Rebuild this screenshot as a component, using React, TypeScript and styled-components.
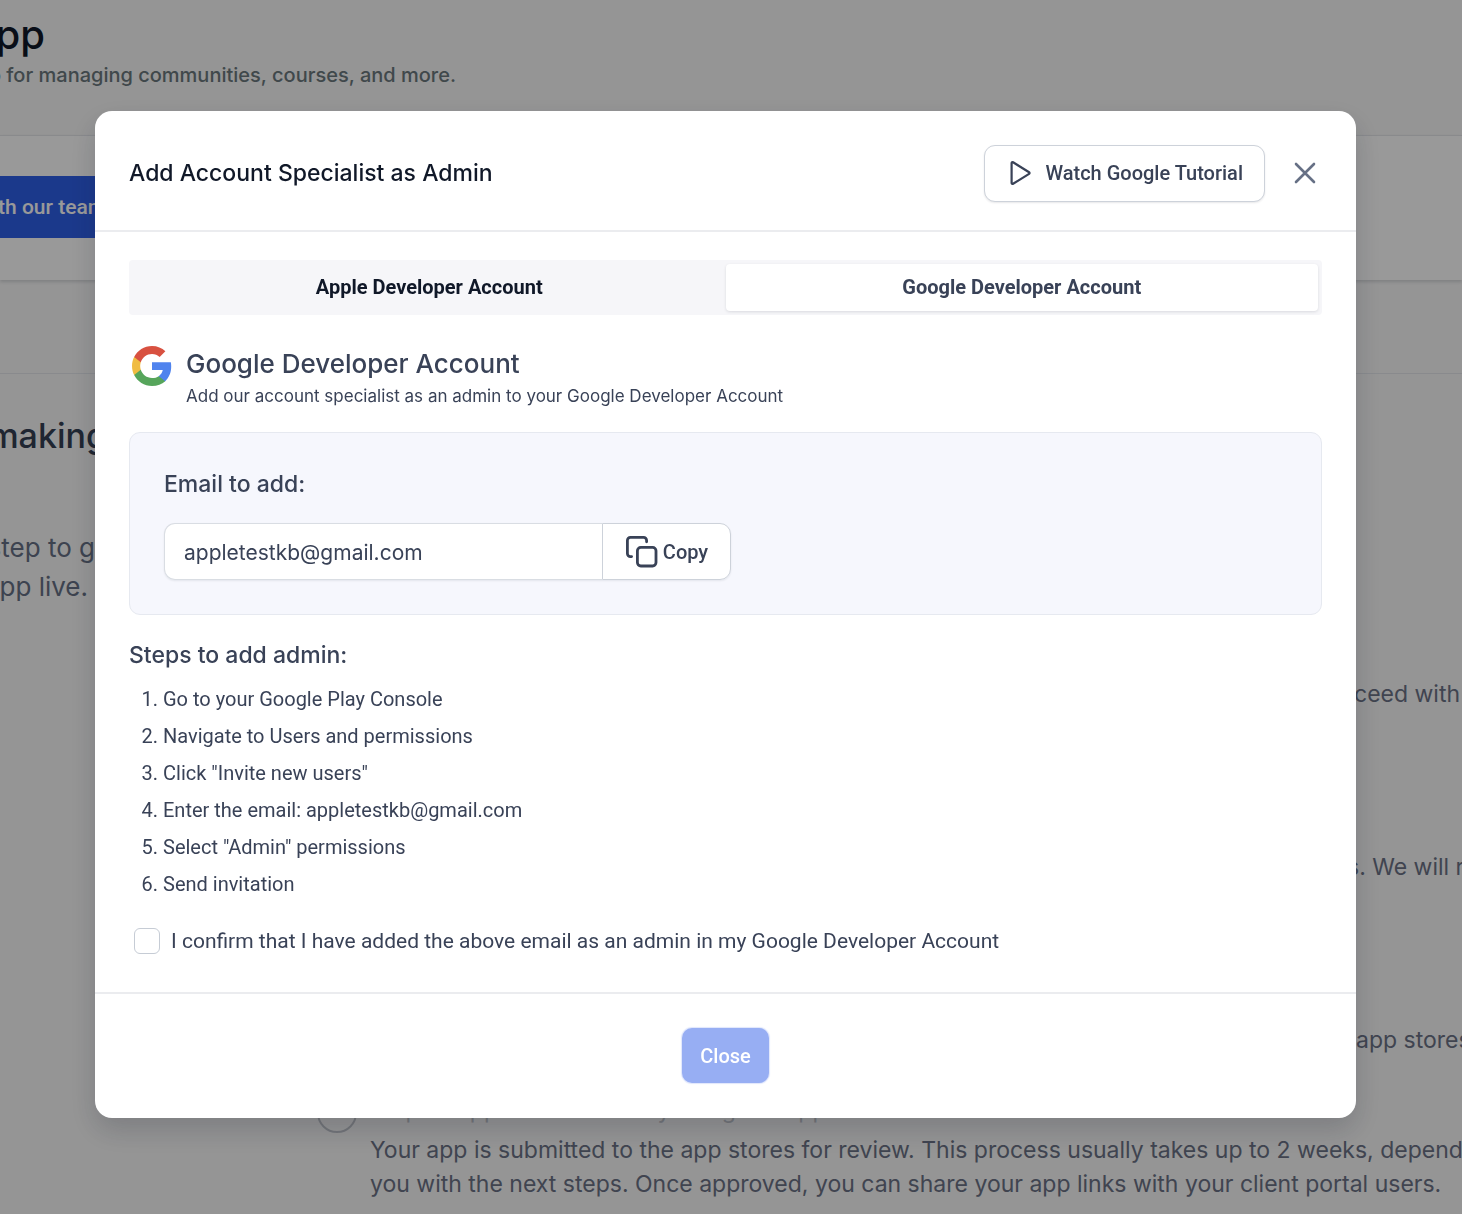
import React, { useState } from "react";
import styled, { createGlobalStyle } from "styled-components";

const inter = `Inter, "Liberation Sans", sans-serif`;
const roboto = `Roboto, "Liberation Sans", sans-serif`;

const GlobalStyle = createGlobalStyle`
  * { box-sizing: border-box; }
  html, body { margin: 0; height: 100%; overflow: hidden; background: #f8f8f8; }
  h1, h2, h3, h4, p, ol { margin: 0; padding: 0; font-weight: inherit; }
  button, input { font: inherit; }
`;

const Page = styled.div`
  font-family: ${inter};
  overflow: hidden;
  height: 100vh;
`;

const PageHeader = styled.header`
  height: 135px;
  padding-top: 8px;
  overflow: hidden;
`;

const Clipped = styled.div<{ $width: number }>`
  display: flex;
  justify-content: flex-end;
  width: ${(p) => p.$width}px;
  overflow: hidden;
  white-space: nowrap;
`;

const PageTitle = styled.h1`
  font-size: 40px;
  line-height: 54px;
  font-weight: 500;
  color: #101828;
`;

const PageSubtitle = styled.p`
  font-size: 20px;
  line-height: 26px;
  font-weight: 500;
  color: #6c787e;
`;

const CallCard = styled.section`
  height: 145px;
  padding-top: 40px;
  background: #fff;
  border-top: 1px solid #e4e6ea;
  box-shadow: 0 2px 3px rgba(16, 24, 40, 0.15);
`;

const CallButton = styled.button`
  display: flex;
  align-items: center;
  justify-content: flex-end;
  width: 124px;
  height: 62px;
  padding: 0 18px 0 0;
  border: 0;
  background: #2e5fe8;
  color: #fff;
  font-family: ${roboto};
  font-size: 21px;
  font-weight: 500;
  white-space: nowrap;
`;

const Divider = styled.div`
  height: 94px;
  border-bottom: 1px solid #e4e7ec;
`;

const Progress = styled.main`
  display: grid;
  grid-template-columns: 317px 1fr;
  padding-top: 40px;
`;

const Aside = styled.aside`
  overflow: hidden;
`;

const AsideTitle = styled.h2`
  font-size: 34px;
  line-height: 44px;
  font-weight: 500;
  color: #344054;
`;

const AsideText = styled.p`
  padding-top: 70px;
  font-size: 26px;
  line-height: 39px;
  color: #667085;
`;

const Stages = styled.div`
  display: flex;
  flex-direction: column;
  padding-top: 223px;
  overflow: hidden;
`;

const Stage = styled.div<{ $height: number }>`
  display: grid;
  grid-template-columns: 40px 1fr;
  column-gap: 13px;
  height: ${(p) => p.$height}px;
`;

const StageDot = styled.span`
  width: 40px;
  height: 40px;
  border: 2px solid #c0c4ca;
  border-radius: 50%;
`;

const StageTitle = styled.h3`
  min-height: 40px;
  padding-bottom: 6px;
  font-size: 23px;
  line-height: 34px;
  font-weight: 400;
  color: #c0c4ca;
  white-space: nowrap;
`;

const StageText = styled.p<{ $offset?: number }>`
  padding-left: ${(p) => p.$offset ?? 0}px;
  font-size: 23px;
  line-height: 34px;
  color: #6b7286;
  white-space: nowrap;
`;

const Backdrop = styled.div`
  position: fixed;
  inset: 0;
  display: flex;
  align-items: flex-start;
  padding: 111px 106px 0 95px;
  background: rgba(0, 0, 0, 0.4);
`;

const Dialog = styled.div`
  flex: 1;
  border-radius: 17px;
  background: #fff;
  color: #394257;
  font-family: ${roboto};
  box-shadow: 0 12px 28px rgba(16, 24, 40, 0.18);
`;

const DialogHeader = styled.header`
  display: flex;
  align-items: center;
  height: 121px;
  padding: 5px 33px 0 34px;
  border-bottom: 2px solid #ebecef;
`;

const DialogTitle = styled.h2`
  flex: 1;
  font-family: ${inter};
  font-size: 23px;
  line-height: 34px;
  font-weight: 500;
  color: #101828;
`;

const TutorialButton = styled.button`
  display: flex;
  align-items: center;
  gap: 13px;
  height: 57px;
  padding: 0 21px;
  border: 1px solid #cdd2da;
  border-radius: 11px;
  background: #fff;
  box-shadow: 0 1px 2px rgba(16, 24, 40, 0.1);
  color: #394257;
  font-size: 20px;
  font-weight: 500;
`;

const DismissButton = styled.button`
  display: flex;
  margin-left: 22px;
  padding: 0;
  border: 0;
  background: none;
  color: #667085;
`;

const DialogBody = styled.div`
  padding: 28px 34px 35px;
`;

const Tabs = styled.div`
  display: grid;
  grid-template-columns: 1fr 1fr;
  height: 55px;
  padding: 4px;
  border-radius: 4px;
  background: #f6f6f9;
`;

const Tab = styled.button<{ $active?: boolean }>`
  padding: 0 0 2px;
  border: 0;
  border-radius: 4px;
  background: ${(p) => (p.$active ? "#fff" : "transparent")};
  box-shadow: ${(p) => (p.$active ? "0 1px 3px rgba(16, 24, 40, 0.12)" : "none")};
  color: ${(p) => (p.$active ? "#394257" : "#101828")};
  font-size: 20px;
  font-weight: 700;
`;

const AccountHeading = styled.div`
  display: flex;
  gap: 14px;
  padding: 31px 0 22px 3px;
`;

const AccountTitle = styled.h3`
  font-family: ${inter};
  font-size: 26px;
  line-height: 36px;
  font-weight: 500;
`;

const AccountNote = styled.p`
  font-family: ${inter};
  font-size: 17px;
  line-height: 28px;
`;

const EmailCard = styled.section`
  padding: 34px;
  border: 1px solid #e6e9f0;
  border-radius: 11px;
  background: #f6f7fd;
`;

const Label = styled.label`
  display: block;
  padding-bottom: 22px;
  font-family: ${inter};
  font-size: 23px;
  line-height: 34px;
  font-weight: 500;
`;

const EmailRow = styled.div`
  display: flex;
  width: 567px;
  height: 57px;
  border-radius: 11px;
  box-shadow: 0 1px 2px rgba(16, 24, 40, 0.08);
`;

const EmailInput = styled.input`
  flex: 1;
  min-width: 0;
  padding: 2px 19px 0;
  border: 1px solid #d9dde3;
  border-right: 0;
  border-radius: 11px 0 0 11px;
  background: #fff;
  color: #394257;
  font-family: ${inter};
  font-size: 21px;
  outline: none;
`;

const CopyButton = styled.button`
  display: flex;
  align-items: center;
  justify-content: center;
  gap: 4px;
  width: 129px;
  padding: 0;
  border: 1px solid #cdd2da;
  border-radius: 0 11px 11px 0;
  background: #fff;
  color: #394257;
  font-size: 20px;
  font-weight: 500;
`;

const StepsTitle = styled.h3`
  padding: 23px 0 13px;
  font-family: ${inter};
  font-size: 23px;
  line-height: 34px;
  font-weight: 500;
`;

const StepList = styled.ol`
  padding-left: 34px;
`;

const StepItem = styled.li`
  height: 37px;
  font-size: 20px;
  line-height: 28px;
`;

const Confirm = styled.label`
  display: flex;
  align-items: center;
  gap: 11px;
  padding: 18px 0 0 5px;
  font-size: 21px;
  line-height: 32px;
`;

const Checkbox = styled.input`
  appearance: none;
  width: 26px;
  height: 26px;
  margin: 0;
  border: 1px solid #c6ccd5;
  border-radius: 6px;
  background: #fff;
`;

const DialogFooter = styled.footer`
  display: flex;
  justify-content: center;
  padding: 34px 0 35px;
  border-top: 2px solid #ebecef;
`;

const CloseButton = styled.button`
  height: 55px;
  padding: 0 18px;
  border: 0;
  border-radius: 10px;
  background: #97aef3;
  box-shadow: 0 0 1px 1px #dfe6fc;
  color: #fff;
  font-size: 20px;
  font-weight: 500;
`;

const GoogleLogo = () => (
  <svg width="40" height="40" viewBox="2 2 44 44" aria-hidden="true">
    <path fill="#4f83ee" d="M45.12 24.5c0-1.56-.14-3.06-.4-4.5H24v8.51h11.84c-.51 2.75-2.06 5.08-4.39 6.64v5.52h7.11c4.16-3.83 6.56-9.47 6.56-16.17z" />
    <path fill="#56a55b" d="M24 46c5.94 0 10.92-1.97 14.56-5.33l-7.11-5.52c-1.97 1.32-4.49 2.1-7.45 2.1-5.73 0-10.58-3.87-12.31-9.07H4.34v5.7C7.96 41.07 15.4 46 24 46z" />
    <path fill="#f0bc42" d="M11.69 28.18C11.25 26.86 11 25.45 11 24s.25-2.86.69-4.18v-5.7H4.34C2.85 17.09 2 20.45 2 24s.85 6.91 2.34 9.88l7.35-5.7z" />
    <path fill="#d85140" d="M24 10.75c3.23 0 6.13 1.11 8.41 3.29l6.31-6.31C34.91 4.18 29.93 2 24 2 15.4 2 7.96 6.93 4.34 14.12l7.35 5.7c1.73-5.2 6.58-9.07 12.31-9.07z" />
  </svg>
);

const PlayIcon = () => (
  <svg width="26" height="26" viewBox="0 0 26 26" fill="none" stroke="currentColor" strokeWidth="2.2" strokeLinejoin="round" aria-hidden="true">
    <path d="M5.6 3.2a1 1 0 0 1 1.5-.9l16 9.9a1 1 0 0 1 0 1.7l-16 9.9a1 1 0 0 1-1.5-.9z" />
  </svg>
);

const CloseIcon = () => (
  <svg width="36" height="36" viewBox="0 0 36 36" fill="none" stroke="currentColor" strokeWidth="2.6" strokeLinecap="round" aria-hidden="true">
    <path d="M9 9l18 18M27 9L9 27" />
  </svg>
);

const CopyIcon = () => (
  <svg width="34" height="34" viewBox="0 0 34 34" fill="none" stroke="currentColor" strokeWidth="2.8" strokeLinecap="round" strokeLinejoin="round" aria-hidden="true">
    <rect x="12.4" y="12.4" width="18.6" height="18.6" rx="3.4" />
    <path d="M6.6 21.6H5.4A3 3 0 0 1 2.4 18.6V5.4a3 3 0 0 1 3-3h13.2a3 3 0 0 1 3 3v1.4" />
  </svg>
);

const email = "appletestkb@gmail.com";

const steps = [
  "Go to your Google Play Console",
  "Navigate to Users and permissions",
  'Click "Invite new users"',
  `Enter the email: ${email}`,
  'Select "Admin" permissions',
  "Send invitation",
];

export default function App() {
  const [confirmed, setConfirmed] = useState(false);

  return (
    <>
      <GlobalStyle />
      <Page>
        <PageHeader>
          <Clipped $width={45}>
            <PageTitle>App</PageTitle>
          </Clipped>
          <Clipped $width={456}>
            <PageSubtitle>app for managing communities, courses, and more.</PageSubtitle>
          </Clipped>
        </PageHeader>
        <CallCard>
          <CallButton>with our team</CallButton>
        </CallCard>
        <Divider />
        <Progress>
          <Aside>
            <Clipped $width={107}>
              <AsideTitle>making</AsideTitle>
            </Clipped>
            <AsideText>
              <Clipped as="span" $width={95}>step to g</Clipped>
              <Clipped as="span" $width={88}>app live.</Clipped>
            </AsideText>
          </Aside>
          <Stages>
            <Stage $height={173}>
              <StageDot />
              <div>
                <StageTitle />
                <StageText $offset={984}>ceed with</StageText>
              </div>
            </Stage>
            <Stage $height={173}>
              <StageDot />
              <div>
                <StageTitle />
                <StageText $offset={977}>s. We will r</StageText>
              </div>
            </Stage>
            <Stage $height={110}>
              <StageDot />
              <div>
                <StageTitle />
                <StageText $offset={986}>app stores</StageText>
              </div>
            </Stage>
            <Stage $height={120}>
              <StageDot />
              <div>
                <StageTitle>Step 4: App store review by Google &amp; Apple</StageTitle>
                <StageText>
                  Your app is submitted to the app stores for review. This process usually takes up to 2 weeks, depending
                  <br />
                  you with the next steps. Once approved, you can share your app links with your client portal users.
                </StageText>
              </div>
            </Stage>
          </Stages>
        </Progress>
      </Page>

      <Backdrop>
        <Dialog role="dialog" aria-modal="true" aria-labelledby="dialog-title">
          <DialogHeader>
            <DialogTitle id="dialog-title">Add Account Specialist as Admin</DialogTitle>
            <TutorialButton type="button">
              <PlayIcon />
              Watch Google Tutorial
            </TutorialButton>
            <DismissButton type="button" aria-label="Dismiss">
              <CloseIcon />
            </DismissButton>
          </DialogHeader>
          <DialogBody>
            <Tabs role="tablist">
              <Tab type="button" role="tab" aria-selected={false}>Apple Developer Account</Tab>
              <Tab type="button" role="tab" aria-selected $active>Google Developer Account</Tab>
            </Tabs>
            <AccountHeading>
              <GoogleLogo />
              <div>
                <AccountTitle>Google Developer Account</AccountTitle>
                <AccountNote>Add our account specialist as an admin to your Google Developer Account</AccountNote>
              </div>
            </AccountHeading>
            <EmailCard>
              <Label htmlFor="admin-email">Email to add:</Label>
              <EmailRow>
                <EmailInput id="admin-email" type="text" readOnly value={email} />
                <CopyButton type="button">
                  <CopyIcon />
                  Copy
                </CopyButton>
              </EmailRow>
            </EmailCard>
            <StepsTitle>Steps to add admin:</StepsTitle>
            <StepList>
              {steps.map((step) => (
                <StepItem key={step}>{step}</StepItem>
              ))}
            </StepList>
            <Confirm>
              <Checkbox type="checkbox" checked={confirmed} onChange={(e) => setConfirmed(e.target.checked)} />
              I confirm that I have added the above email as an admin in my Google Developer Account
            </Confirm>
          </DialogBody>
          <DialogFooter>
            <CloseButton type="button">Close</CloseButton>
          </DialogFooter>
        </Dialog>
      </Backdrop>
    </>
  );
}
